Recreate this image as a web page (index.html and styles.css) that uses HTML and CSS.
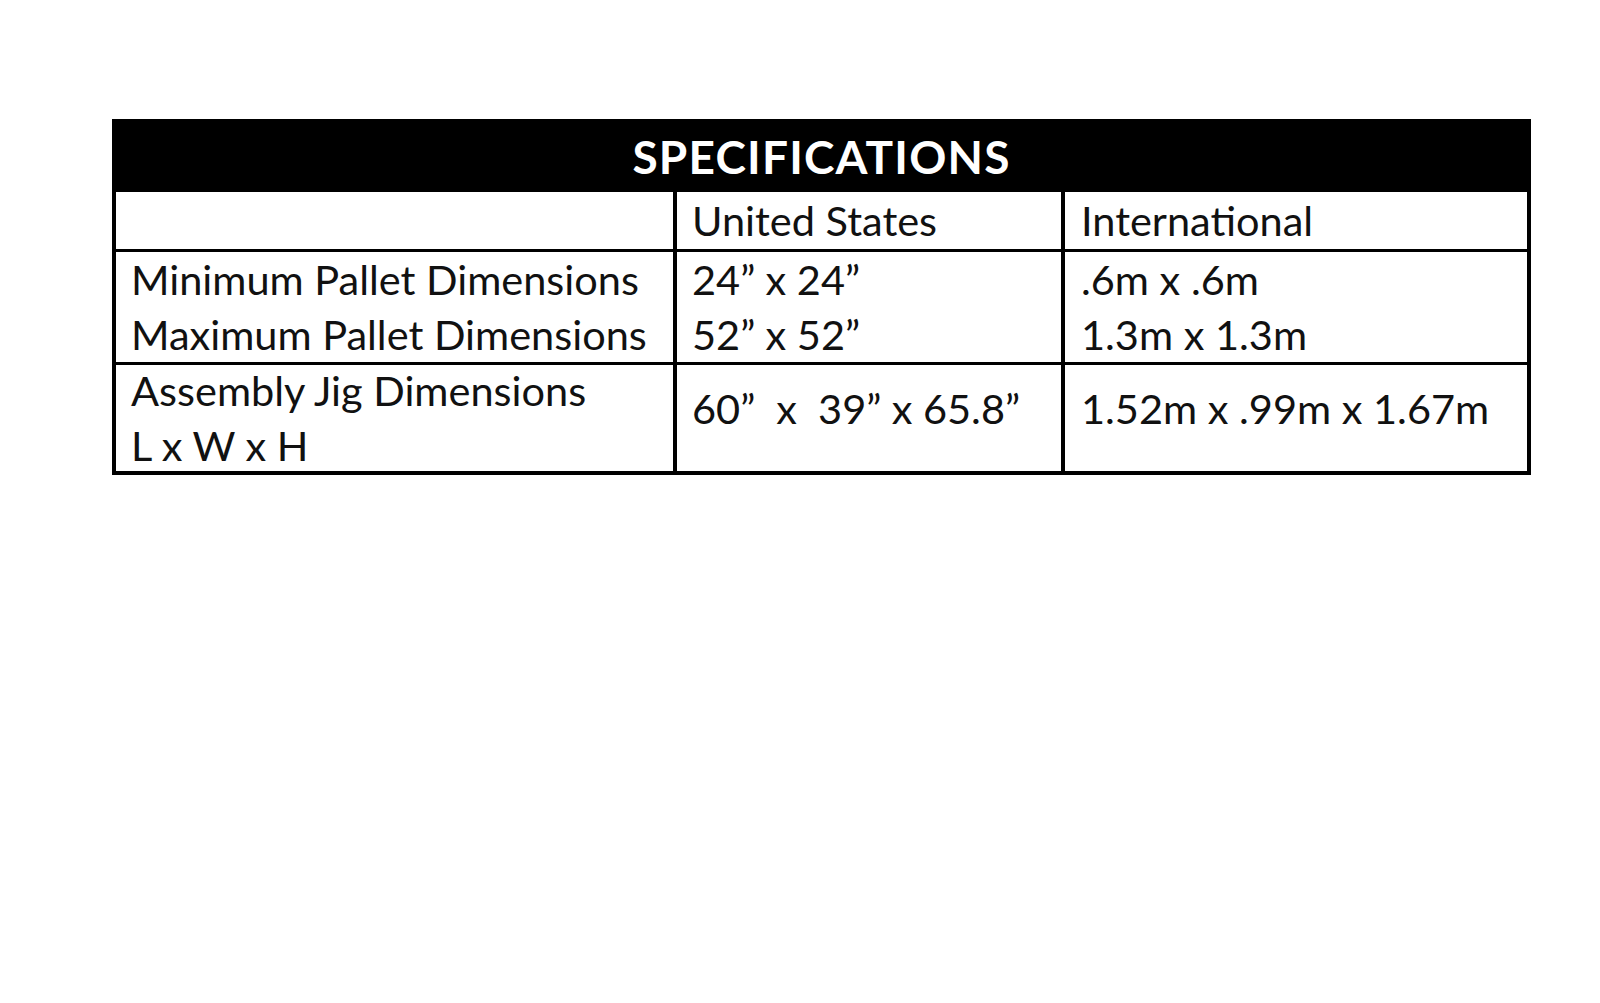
FILE: index.html
```html
<!DOCTYPE html>
<html lang="en">
<head>
<meta charset="utf-8">
<title>Specifications</title>
<link rel="stylesheet" href="styles.css">
</head>
<body>
<div class="spec-table">
  <div class="title">SPECIFICATIONS</div>
  <div class="cell"></div>
  <div class="cell">United States</div>
  <div class="cell">International</div>
  <div class="cell">Minimum Pallet Dimensions<br>Maximum Pallet Dimensions</div>
  <div class="cell">24” x 24”<br>52” x 52”</div>
  <div class="cell">.6m x .6m<br>1.3m x 1.3m</div>
  <div class="cell">Assembly Jig Dimensions<br>L x W x H</div>
  <div class="cell raised">60”&nbsp; x&nbsp; 39” x 65.8”</div>
  <div class="cell raised">1.52m x .99m x 1.67m</div>
</div>
</body>
</html>
```
FILE: styles.css
```css
html, body {
  margin: 0;
  padding: 0;
  background: #fff;
}
body {
  font-family: Lato, "Open Sans", sans-serif;
  color: #111;
}
.spec-table {
  margin: 119px 0 0 112px;
  width: 1419px;
  box-sizing: border-box;
  background: #000;
  padding: 0 4px 4px 4px;
  display: grid;
  grid-template-columns: 557px 384px 462px;
  grid-template-rows: 70px 57px 110px 106px;
  column-gap: 4px;
  row-gap: 3px;
}
.title {
  grid-column: 1 / -1;
  color: #fff;
  font-weight: 700;
  font-size: 46px;
  text-align: center;
  display: flex;
  align-items: center;
  justify-content: center;
  padding-top: 4px;
  letter-spacing: 1.2px;
}
.cell {
  background: #fff;
  font-size: 41.5px;
  line-height: 55px;
  padding: 0 16px 0 15px;
  display: flex;
  flex-direction: column;
  justify-content: center;
  white-space: nowrap;
}
.cell:nth-child(3n+4) {
  padding-left: 16px;
}
.cell.raised {
  padding-bottom: 20px;
}
```
